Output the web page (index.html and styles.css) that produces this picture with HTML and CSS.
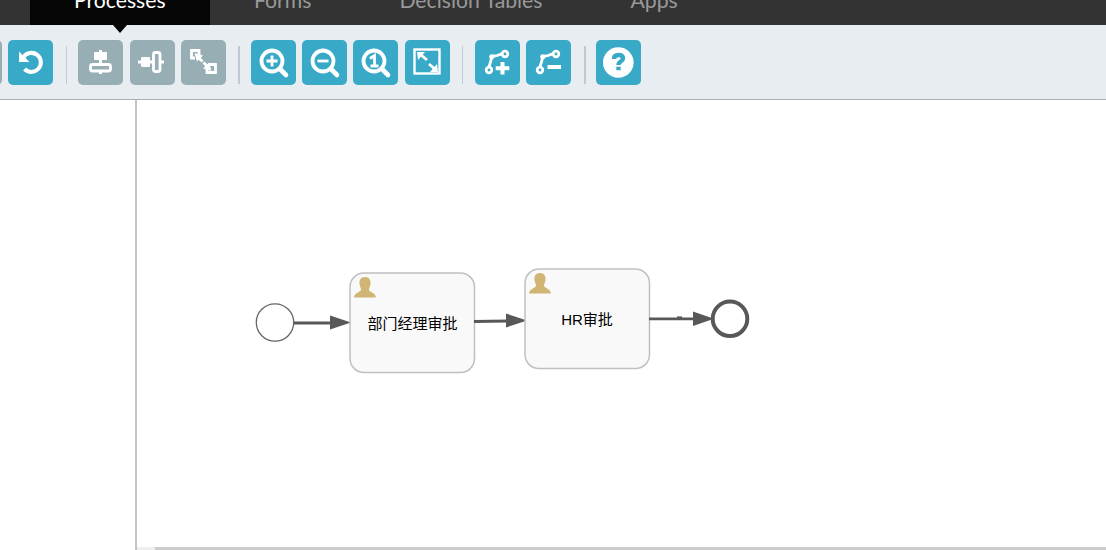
FILE: index.html
```html
<!DOCTYPE html>
<html lang="en">
<head>
    <meta charset="UTF-8">
    <title>Process editor</title>
    <link rel="stylesheet" href="styles.css">
</head>
<body>
    <header class="topbar">
        <nav class="tabs">
            <a class="tab tab-active">Processes</a>
            <a class="tab">Forms</a>
            <a class="tab">Decision Tables</a>
            <a class="tab">Apps</a>
        </nav>
    </header>

    <div class="toolbar">
        <button class="tool tool-off tool-cut"></button>
        <button class="tool tool-undo">
            <svg viewBox="0 0 45 45"><path class="line heavy-line" d="M15.500 17A9.500 9.500 0 1 1 16.500 29"/><path class="solid" d="M11 11.500V22H21.500Z"/></svg>
        </button>
        <span class="sep"></span>
        <button class="tool tool-off">
            <svg viewBox="0 0 45 45"><path class="line" d="M22.500 10V13M22.500 19V24M22.500 31V34"/><rect class="solid" x="16" y="12" width="13" height="8" rx="1"/><rect class="line fill-off" x="12.500" y="24.500" width="20" height="6.500" rx="2"/></svg>
        </button>
        <button class="tool tool-off">
            <svg viewBox="0 0 45 45"><path class="line" d="M8 22H12M19 22H24M30 22H34"/><rect class="solid" x="11" y="17" width="9" height="10" rx="1"/><rect class="line fill-off" x="23.500" y="12.500" width="6.500" height="19" rx="2"/></svg>
        </button>
        <button class="tool tool-off">
            <svg viewBox="0 0 45 45"><path class="line" d="M18 15V10.500H10.500V18H14"/><path class="line" d="M28 24.500H34.500V32.500H26V29"/><path class="solid" d="M13.500 13L22 15.500L16 21.500Z"/><path class="line" d="M17 17L21.500 21.500"/><path class="solid" d="M30.500 31L22 28.500L28 22.500Z"/><path class="line" d="M27 27L22.500 22.500"/></svg>
        </button>
        <span class="sep sep-wide"></span>
        <button class="tool">
            <svg viewBox="0 0 45 45"><circle class="line fat" cx="21" cy="21" r="10.500"/><path class="line heavy" d="M29.500 29.500L35 35"/><path class="line" d="M21 15.500V26.500M15.500 21H26.500"/></svg>
        </button>
        <button class="tool">
            <svg viewBox="0 0 45 45"><circle class="line fat" cx="21" cy="21" r="10.500"/><path class="line heavy" d="M29.500 29.500L35 35"/><path class="line" d="M15.500 21H26.500"/></svg>
        </button>
        <button class="tool">
            <svg viewBox="0 0 45 45"><circle class="line fat" cx="21" cy="21" r="10.500"/><path class="line heavy" d="M29.500 29.500L35 35"/><path class="line" d="M17 18.500L21.500 15.500V26.500M17.500 26H25.500"/></svg>
        </button>
        <button class="tool">
            <svg viewBox="0 0 45 45"><rect class="thin" x="9.500" y="9.500" width="25" height="24"/><path class="line" d="M15 14L22 20M24 24L31 30"/><path class="solid" d="M12 12H20L13 20ZM33 32H25L32 24Z"/></svg>
        </button>
        <span class="sep sep-flows"></span>
        <button class="tool">
            <svg viewBox="0 0 45 45"><path class="line" d="M14 27L16.500 18.500Q17 16 19.500 16C23 16 24 14 27.500 14"/><circle class="line" cx="30" cy="14" r="2.800"/><circle class="line" cx="14" cy="30" r="2.800"/><circle class="solid" cx="16.700" cy="16.700" r="2.500"/><path class="line plus" d="M20.700 28.300H34.300M27.500 22V34.500"/></svg>
        </button>
        <button class="tool">
            <svg viewBox="0 0 45 45"><path class="line" d="M14 27L16.500 18.500Q17 16 19.500 16C23 16 24 14 27.500 14"/><circle class="line" cx="30" cy="14" r="2.800"/><circle class="line" cx="14" cy="30" r="2.800"/><circle class="solid" cx="16.700" cy="16.700" r="2.500"/><path class="line plus" d="M21.500 27H35"/></svg>
        </button>
        <span class="sep sep-wide"></span>
        <button class="tool">
            <svg viewBox="0 0 45 45"><circle class="solid" cx="22.300" cy="22.500" r="15.300"/><path class="mark" d="M18 19Q18 15 22.500 15Q27 15 27 18.500C27 21.500 22.500 21 22.500 25"/><rect class="mark-dot" x="20.300" y="26.700" width="4.400" height="3.500"/></svg>
        </button>
    </div>

    <main class="workspace">
        <aside class="palette"></aside>
        <section class="canvas">
            <svg class="diagram" viewBox="137 100 969 447">
                <circle class="start" cx="275" cy="322.500" r="18.700"/>

                <path class="flow" d="M294 323H332"/>
                <path class="head" d="M330 315.500L351 322.500L330 329.500Z"/>

                <rect class="task" x="350" y="273" width="124.500" height="99.500" rx="14"/>
                <path class="person" d="M365 277C369.500 277 371 280.500 370.500 284C370 287 368.800 288.500 369 290C369.500 292 375.500 292.500 376 297.500H354C354.500 292.500 360.500 292 361 290C361.200 288.500 360 287 359.500 284C359 280.500 360.500 277 365 277Z"/>
                <text class="label" x="412.500" y="329">部门经理审批</text>

                <path class="flow" d="M474 321.500L508 321"/>
                <path class="head" d="M506 313.500L527 320.500L506 327.500Z"/>

                <rect class="task" x="525" y="269" width="124.500" height="99.500" rx="14"/>
                <path class="person" d="M540 273C544.500 273 546 276.500 545.500 280C545 283 543.800 284.500 544 286C544.500 288 550.500 288.500 551 293.500H529C529.500 288.500 535.500 288 536 286C536.200 284.500 535 283 534.500 280C534 276.500 535.500 273 540 273Z"/>
                <text class="label" x="587" y="325">HR审批</text>

                <path class="flow" d="M649 318.800H695"/>
                <path class="flow" d="M677 317.800H682"/>
                <path class="head" d="M693 311.500L714 318.800L693 326Z"/>
                <circle class="end" cx="730" cy="318.800" r="17.300"/>
            </svg>
            <div class="scrollbar"><div class="scroll-track"></div></div>
        </section>
    </main>
</body>
</html>
```

FILE: styles.css
```css
* { margin: 0; padding: 0; box-sizing: border-box; }
html, body { height: 100%; overflow: hidden; }
body { font-family: Lato, "Liberation Sans", sans-serif; background: #fff; display: flex; flex-direction: column; }

/* top navigation, scrolled so only the lower part of the tabs shows */
.topbar { height: 25px; background: #333; padding-left: 30px; flex: none; }
.tabs { display: flex; height: 25px; }
.tab { position: relative; height: 45px; margin-top: -20px; padding: 0 44px 5px; display: flex; align-items: center; font-size: 21.200px; color: #999; white-space: nowrap; }
.tab-active { width: 180px; background: #050505; color: #fff; }
.tab-active::after { content: ""; position: absolute; left: 83px; top: 45px; border-left: 7px solid transparent; border-right: 7px solid transparent; border-top: 8px solid #050505; }

/* toolbar */
.toolbar { height: 75px; flex: none; background: #e8edf1; border-bottom: 1px solid #a9aeb8; display: flex; align-items: flex-start; padding: 15px 0 0 6px; gap: 6.4px; }
.tool { width: 45px; height: 45px; border: none; border-radius: 5px; background: #39a9c8; flex: none; }
.tool svg { display: block; width: 45px; height: 45px; }
.tool-off { background: #98aeb5; }
.tool-cut { margin-left: -49px; }
.sep { width: 1px; height: 38px; margin: 6px 5px 0 6px; background: #c2c7d0; flex: none; }
.sep-wide { width: 2px; margin-right: 3.800px; }
.sep-flows { margin-right: 5.500px; }

.line, .thin, .mark { fill: none; stroke: #fff; stroke-width: 2.800; }
.thin { stroke-width: 2.400; }
.heavy-line { stroke-width: 4; }
.fat { stroke-width: 3.800; }
.heavy { stroke-width: 4.600; stroke-linecap: round; }
.plus { stroke-width: 4; }
.solid { fill: #fff; }
.mark { stroke: #39a9c8; stroke-width: 4.400; }
.mark-dot { fill: #39a9c8; }

/* editor area */
.workspace { flex: 1; display: flex; min-height: 0; }
.palette { width: 137px; flex: none; border-right: 2px solid #c4c4c4; }
.canvas { flex: 1; display: flex; flex-direction: column; min-width: 0; }
.diagram { display: block; width: 969px; height: 447px; flex: none; }
.scrollbar { height: 3px; background: #eee; padding-left: 18px; flex: none; }
.scroll-track { height: 3px; background: #ccc; }

.start { fill: #fff; stroke: #666; stroke-width: 1.300; }
.end { fill: #fff; stroke: #585858; stroke-width: 4; }
.flow { fill: none; stroke: #585858; stroke-width: 2.800; }
.head { fill: #585858; }
.task { fill: #f9f9f9; stroke: #c0c0c0; stroke-width: 1.500; }
.person { fill: #d1b574; }
.label { font-family: "Liberation Sans", "Noto Sans CJK SC", sans-serif; font-size: 15px; text-anchor: middle; fill: #000; }
```
